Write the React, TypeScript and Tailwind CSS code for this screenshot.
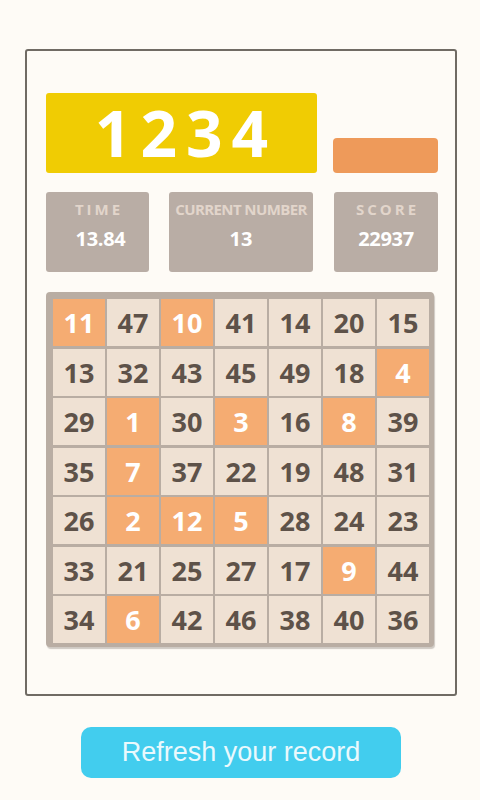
import React from "react";

const grid: number[][] = [
  [11, 47, 10, 41, 14, 20, 15],
  [13, 32, 43, 45, 49, 18, 4],
  [29, 1, 30, 3, 16, 8, 39],
  [35, 7, 37, 22, 19, 48, 31],
  [26, 2, 12, 5, 28, 24, 23],
  [33, 21, 25, 27, 17, 9, 44],
  [34, 6, 42, 46, 38, 40, 36],
];

export default function App() {
  return (
    <div
      className="w-[480px] h-[800px] bg-[#fefbf6] overflow-hidden pt-[49px]"
      style={{ fontFamily: '"Open Sans", "DejaVu Sans", sans-serif' }}
    >
      <div className="ml-[25px] w-[432px] h-[647px] border-2 border-[#706b64] rounded-[3px] pl-[19px] pt-[42px]">
        <div className="flex items-end">
          <div className="w-[271px] h-[80px] bg-[#f0cc03] rounded-[3px] flex items-center justify-center">
            <span className="text-white font-bold text-[64px] leading-none tracking-[9px] pl-[9px]">1234</span>
          </div>
          <div className="ml-[16px] w-[105px] h-[35px] bg-[#ee9a5a] rounded-[4px]" />
        </div>
        <div className="flex mt-[19px]">
          <div className="w-[103px] h-[80px] bg-[#b9ada5] rounded-[3px] flex flex-col items-center pt-[8px]">
            <div className="text-[15px] leading-[18px] font-bold text-[#e2d5cb] tracking-[3px] pl-[3px]">TIME</div>
            <div className="mt-[9px] text-[20px] leading-[24px] font-bold text-white tracking-[-0.3px] pl-[6px]">13.84</div>
          </div>
          <div className="ml-[20px] w-[144px] h-[80px] bg-[#b9ada5] rounded-[3px] flex flex-col items-center pt-[8px]">
            <div className="text-[15px] leading-[18px] font-bold text-[#e2d5cb] tracking-[-0.6px] whitespace-nowrap">CURRENT NUMBER</div>
            <div className="mt-[9px] text-[20px] leading-[24px] font-bold text-white">13</div>
          </div>
          <div className="ml-[21px] w-[104px] h-[80px] bg-[#b9ada5] rounded-[3px] flex flex-col items-center pt-[8px]">
            <div className="text-[15px] leading-[18px] font-bold text-[#e2d5cb] tracking-[3px] pl-[3px]">SCORE</div>
            <div className="mt-[9px] text-[20px] leading-[24px] font-bold text-white tracking-[-0.3px]">22937</div>
          </div>
        </div>
        <div className="mt-[20px] w-[388px] bg-[#b9ada3] rounded-[4px] pt-[7px] pb-[4px] pl-[7px] pr-[5px] shadow-[1px_2px_1px_rgba(120,110,100,0.35)]">
          <div className="grid grid-cols-[repeat(7,52px)] gap-x-[2px] gap-y-[2.5px]">
            {grid.flat().map((n, i) => {
              const hit = n <= 12;
              return (
                <div
                  key={i}
                  className={
                    hit
                      ? "h-[47px] bg-[#f5ac72] flex items-center justify-center text-white font-bold text-[27px] leading-none"
                      : "h-[47px] bg-[#efe1d3] flex items-center justify-center text-[#5e5249] font-bold text-[27px] leading-none"
                  }
                >
                  {n}
                </div>
              );
            })}
          </div>
        </div>
      </div>
      <div className="mt-[31px] ml-[81px] w-[320px] h-[51px] bg-[#42cdee] rounded-[10px] flex items-center justify-center">
        <span
          className="text-[27px] leading-none text-[#eaf9fd]"
          style={{ fontFamily: '"Liberation Sans", Arial, sans-serif' }}
        >
          Refresh your record
        </span>
      </div>
    </div>
  );
}
